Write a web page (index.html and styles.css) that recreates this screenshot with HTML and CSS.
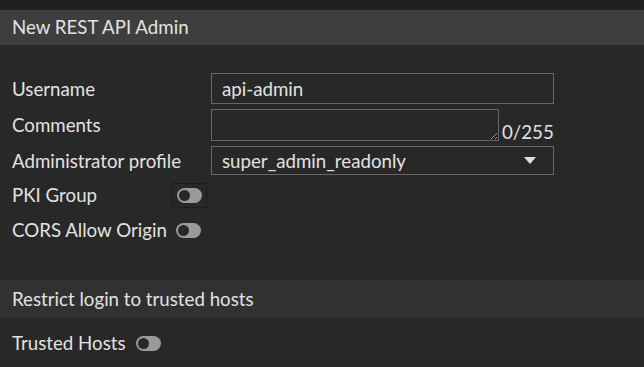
FILE: index.html
```html
<!DOCTYPE html>
<html lang="en">
<head>
  <meta charset="UTF-8">
  <title>New REST API Admin</title>
  <link rel="stylesheet" href="styles.css">
</head>
<body>
<div class="topbar"></div>
<div class="panel">
  <div class="panel-title">New REST API Admin</div>
  <div class="form">
    <div class="row">
      <label class="label">Username</label>
      <input class="field" type="text" value="api-admin">
    </div>
    <div class="row row-comments">
      <label class="label">Comments</label>
      <textarea class="field area"></textarea>
      <span class="counter">0/255</span>
    </div>
    <div class="row">
      <label class="label">Administrator profile</label>
      <div class="field select">
        <span>super_admin_readonly</span>
        <span class="caret"></span>
      </div>
    </div>
    <div class="row toggle-row first-toggle">
      <label class="label short">PKI Group</label>
      <span class="focus-box"><span class="toggle"><span class="knob"></span></span></span>
    </div>
    <div class="row toggle-row">
      <label class="label short">CORS Allow Origin</label>
      <span class="toggle"><span class="knob"></span></span>
    </div>
  </div>
  <div class="section-title">Restrict login to trusted hosts</div>
  <div class="form form-hosts">
    <div class="row toggle-row">
      <label class="label">Trusted Hosts</label>
      <span class="toggle"><span class="knob"></span></span>
    </div>
  </div>
</div>
</body>
</html>
```

FILE: styles.css
```css
body {
    margin: 0;
    background: #282828;
    color: #e2e2e2;
    font-family: Lato, 'Open Sans', sans-serif;
    font-size: 18.7px;
    overflow: hidden;
}

.topbar {
    height: 10px;
    background: #202020;
}

.panel-title {
    background: #3e3e3e;
    height: 35px;
    line-height: 35px;
    padding-left: 12px;
}

.form {
    padding: 28px 12px 0 12px;
}

.row {
    display: flex;
    align-items: center;
    margin-bottom: 5px;
}

.label {
    width: 199px;
    flex-shrink: 0;
}

.label.short {
    width: auto;
    min-width: 155px;
}

.field {
    box-sizing: border-box;
    width: 343px;
    height: 31px;
    border: 1px solid #666;
    background: #282828;
    color: #e2e2e2;
    font-family: inherit;
    font-size: 18.7px;
    padding: 0 10px;
    margin: 0;
}

.row-comments {
    align-items: flex-end;
}

.row-comments .label {
    align-self: center;
}

.area {
    width: 288px;
    height: 32px;
    resize: vertical;
}

.counter {
    margin-left: 3px;
    line-height: 18px;
}

.select {
    display: flex;
    align-items: center;
    justify-content: space-between;
    height: 29px;
}

.caret {
    width: 0;
    height: 0;
    border-left: 6px solid transparent;
    border-right: 6px solid transparent;
    border-top: 7px solid #e2e2e2;
    margin-right: 7px;
}

.toggle-row {
    height: 30px;
    margin-bottom: 5px;
}

.first-toggle {
    margin-top: 5px;
}

.focus-box {
    display: inline-flex;
    padding: 4px;
    margin-left: 5px;
    border: 1px solid #1c1c1c;
}

.focus-box .toggle {
    margin-left: 0;
}

.toggle {
    position: relative;
    display: inline-block;
    width: 25px;
    height: 15px;
    border-radius: 8px;
    background: #9a9a9a;
    margin-left: 9px;
}

.knob {
    position: absolute;
    left: 2px;
    top: 2px;
    width: 11px;
    height: 11px;
    border-radius: 50%;
    background: #282828;
}

.section-title {
    margin-top: 35px;
    background: #313131;
    height: 38px;
    line-height: 38px;
    padding-left: 12px;
}

.form-hosts {
    padding-top: 10px;
}

.form-hosts .label {
    width: auto;
}

.form-hosts .toggle {
    margin-left: 10px;
}
```
